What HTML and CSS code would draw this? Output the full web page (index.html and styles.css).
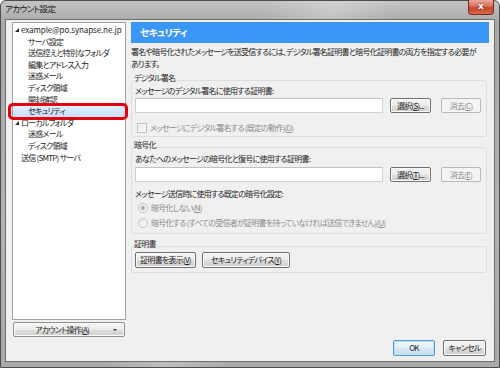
FILE: index.html
```html
<!DOCTYPE html>
<html lang="ja">
<head>
<meta charset="utf-8">
<title>アカウント設定</title>
<link rel="stylesheet" href="styles.css">
</head>
<body>
<div class="window">
  <div class="titlebar">
    <span class="title">アカウント設定</span>
    <span class="close">x</span>
  </div>
  <div class="client">
    <div class="main">
      <div class="left">
        <div class="tree">
          <div class="row top email"><span class="twisty"></span>example@po.synapse.ne.jp</div>
          <div class="row child">サーバ設定</div>
          <div class="row child">送信控えと特別なフォルダ</div>
          <div class="row child">編集とアドレス入力</div>
          <div class="row child">迷惑メール</div>
          <div class="row child">ディスク領域</div>
          <div class="row child">開封確認</div>
          <div class="row child selected">セキュリティ<span class="mark"></span></div>
          <div class="row top"><span class="twisty"></span>ローカルフォルダ</div>
          <div class="row child">迷惑メール</div>
          <div class="row child">ディスク領域</div>
          <div class="row top">送信 (SMTP) サーバ</div>
        </div>
        <button class="btn acct">アカウント操作(<u>A</u>)<span class="drop"></span></button>
      </div>
      <div class="right">
        <div class="header">セキュリティ</div>
        <p class="desc">署名や暗号化されたメッセージを送受信するには、デジタル署名証明書と暗号化証明書の両方を指定する必要が<br>あります。</p>

        <div class="legend l1">デジタル署名</div>
        <div class="group g1">
          <div class="label">メッセージのデジタル署名に使用する証明書:</div>
          <div class="certrow">
            <div class="field"></div>
            <button class="btn pick">選択(<u>S</u>)...</button>
            <button class="btn dis clear">消去(<u>C</u>)</button>
          </div>
          <div class="opt dis o1"><span class="chk"></span>メッセージにデジタル署名する (既定の動作)(<u>D</u>)</div>
        </div>

        <div class="legend l2">暗号化</div>
        <div class="group g2">
          <div class="label">あなたへのメッセージの暗号化と復号に使用する証明書:</div>
          <div class="certrow">
            <div class="field"></div>
            <button class="btn pick">選択(<u>T</u>)...</button>
            <button class="btn dis clear">消去(<u>E</u>)</button>
          </div>
          <div class="label l-enc">メッセージ送信時に使用する既定の暗号化設定:</div>
          <div class="opt dis r1"><span class="radio on"></span>暗号化しない(<u>N</u>)</div>
          <div class="opt dis r2"><span class="radio"></span>暗号化する (すべての受信者が証明書を持っていなければ送信できません)(<u>U</u>)</div>
        </div>

        <div class="legend l3">証明書</div>
        <div class="group g3">
          <button class="btn tall show">証明書を表示(<u>V</u>)</button>
          <button class="btn tall dev">セキュリティデバイス(<u>Y</u>)</button>
        </div>
      </div>
    </div>
    <div class="footer">
      <button class="btn tall ok">OK</button>
      <button class="btn tall cancel">キャンセル</button>
    </div>
  </div>
</div>
</body>
</html>
```
FILE: styles.css
```css
* { box-sizing: border-box; }
html, body { margin: 0; padding: 0; }
body {
  width: 500px;
  height: 368px;
  overflow: hidden;
  background: #ffffff;
  font-family: "Noto Sans CJK JP", "Noto Sans", sans-serif;
  font-size: 8px;
  letter-spacing: -0.75px;
  color: #1e1e1e;
  font-feature-settings: "palt";
}
u { text-decoration: underline; text-underline-offset: 1px; }

.window {
  width: 500px;
  height: 368px;
  display: flex;
  flex-direction: column;
  border: 1px solid #4d4d4d;
  border-radius: 6px 6px 0 0;
  padding: 0 4px 5px 4px;
  background:
    linear-gradient(115deg, rgba(255,255,255,0) 40%, rgba(255,255,255,0.25) 50%, rgba(255,255,255,0) 60%),
    linear-gradient(180deg, #c4c4c4 0%, #a8a8a8 6%, #b2b2b2 60%, #a9a9a9 100%);
}

.titlebar {
  height: 18px;
  display: flex;
  align-items: flex-start;
}
.title {
  margin-top: 2px;
  font-size: 8.5px;
  letter-spacing: -0.6px;
  line-height: 11px;
  color: #1a1a1a;
}
.close {
  margin-left: auto;
  margin-right: 1px;
  margin-top: -1px;
  width: 26px;
  height: 15px;
  border: 1px solid #7a2a20;
  border-top: none;
  border-radius: 0 0 4px 4px;
  background: linear-gradient(180deg, #e9a99b 0%, #d8705c 45%, #c5432b 55%, #d76a4f 100%);
  color: #ffffff;
  font-family: "DejaVu Sans", sans-serif;
  font-weight: bold;
  font-size: 9px;
  letter-spacing: 0;
  line-height: 12px;
  text-align: center;
  text-shadow: 0 0 2px #5a1a10;
}

.client {
  flex: 1;
  background: #f0f0f0;
  border: 1px solid #6e6e6e;
  display: flex;
  flex-direction: column;
  padding: 2px 3px 5px 6px;
}
.main {
  display: flex;
  gap: 5px;
  height: 315px;
}

/* left column */
.left {
  width: 114px;
  display: flex;
  flex-direction: column;
  gap: 2px;
}
.tree {
  flex: 1;
  background: #ffffff;
  border: 1px solid #a0a3a8;
  padding-top: 1px;
}
.row {
  position: relative;
  height: 11.6px;
  line-height: 11.6px;
  white-space: nowrap;
}
.row.top { padding-left: 8px; }
.row.child { padding-left: 15px; }
.row.email { letter-spacing: -0.1px; }
.twisty {
  position: absolute;
  left: 2px;
  top: 4px;
  width: 0;
  height: 0;
  border-left: 4px solid transparent;
  border-bottom: 4px solid #262626;
}
.row.selected {
  background: linear-gradient(180deg, #e3effd 0%, #c9defa 100%);
}
.mark {
  position: absolute;
  left: -5px;
  right: -3px;
  top: -2.4px;
  bottom: -3.2px;
  border: 3px solid #e3000f;
  border-radius: 5px;
}

/* buttons */
.btn {
  display: inline-block;
  height: 15px;
  padding: 0;
  margin: 0;
  border: 1px solid #707070;
  border-radius: 2px;
  background: linear-gradient(180deg, #f4f4f4 0%, #ececec 50%, #dedede 51%, #d0d0d0 100%);
  box-shadow: inset 0 0 0 1px #fbfbfb;
  font-family: inherit;
  font-size: 8px;
  letter-spacing: -0.75px;
  font-feature-settings: "palt";
  line-height: 13px;
  color: #1e1e1e;
  text-align: center;
  white-space: nowrap;
}
.btn.tall { height: 16px; line-height: 14px; }
.btn.dis {
  border-color: #b6babd;
  background: #f4f4f4;
  box-shadow: none;
  color: #8f8f8f;
}
.acct {
  position: relative;
  width: 112px;
  margin-left: 1px;
  height: 15px;
  padding-right: 14px;
  border-color: #8e8f8f;
}
.drop {
  position: absolute;
  right: 7px;
  top: 6px;
  width: 0;
  height: 0;
  border-left: 2px solid transparent;
  border-right: 2px solid transparent;
  border-top: 2px solid #333333;
}

/* right column */
.right { width: 360px; }
.header {
  width: 358px;
  height: 21px;
  background: #3b97f7;
  color: #ffffff;
  font-weight: bold;
  font-size: 9.5px;
  letter-spacing: -0.5px;
  line-height: 21px;
  padding-left: 9px;
}
.desc {
  margin: 3px 0 0 0;
  line-height: 11.5px;
  white-space: nowrap;
}
.legend {
  line-height: 11px;
  height: 11px;
  padding-left: 3px;
  margin-bottom: -3px;
  color: #2a2a2a;
}
.l1 { margin-top: 3px; }
.l2 { margin-top: 2px; }
.l3 { margin-top: 4px; }
.group {
  width: 356px;
  border: 1px solid #dadfe3;
  border-radius: 3px;
  padding: 0 5px 0 3px;
}
.label { line-height: 11px; height: 11px; white-space: nowrap; }
.g1 { padding-top: 4px; padding-bottom: 3px; }
.g1 .certrow { margin-top: 2px; }
.o1 { margin-top: 9px; }

.g2 { padding-top: 5px; padding-bottom: 5px; }
.g2 .certrow { margin-top: 3px; }
.l-enc { margin-top: 6px; }
.r1 { margin-top: 3px; }
.r2 { margin-top: 4px; }

.g3 {
  display: flex;
  gap: 6px;
  padding-top: 5px;
  padding-bottom: 4px;
}
.show { width: 61px; }
.dev { width: 88px; }

.certrow {
  display: flex;
  height: 15px;
}
.field {
  flex: 1;
  height: 15px;
  background: #ffffff;
  border: 1px solid #cdd0d6;
  border-top-color: #bfc2c8;
}
.pick { width: 41px; margin-left: 7px; }
.clear { width: 40px; margin-left: 10px; }

.opt {
  display: flex;
  align-items: center;
  height: 11px;
  line-height: 11px;
  white-space: nowrap;
}
.opt.dis { color: #8c8c8c; }
.chk {
  width: 10px;
  height: 10px;
  margin: 0 3px 0 2px;
  border: 1px solid #c0c0c0;
  background: linear-gradient(135deg, #e8e8e8 0%, #fbfbfb 100%);
  box-shadow: inset 0 0 0 1px #f6f6f6;
}
.radio {
  position: relative;
  width: 10px;
  height: 10px;
  margin: 0 3px 0 3px;
  border-radius: 50%;
  border: 1px solid #c3c3c3;
  background: linear-gradient(135deg, #e6e6e6 0%, #fafafa 100%);
}
.radio.on::after {
  content: "";
  position: absolute;
  left: 2px;
  top: 2px;
  width: 4px;
  height: 4px;
  border-radius: 50%;
  background: #a9a9a9;
}

/* footer */
.footer {
  display: flex;
  justify-content: flex-end;
  gap: 8px;
  margin-top: 3px;
  height: 16px;
  padding-right: 5px;
}
.ok {
  width: 42px;
  border-color: #4d9ad3;
  box-shadow: inset 0 0 0 1px #b9e4fa;
  background: linear-gradient(180deg, #f0f7fc 0%, #e6f0f8 50%, #d7e7f4 51%, #cbdff0 100%);
}
.cancel { width: 43px; }
```
